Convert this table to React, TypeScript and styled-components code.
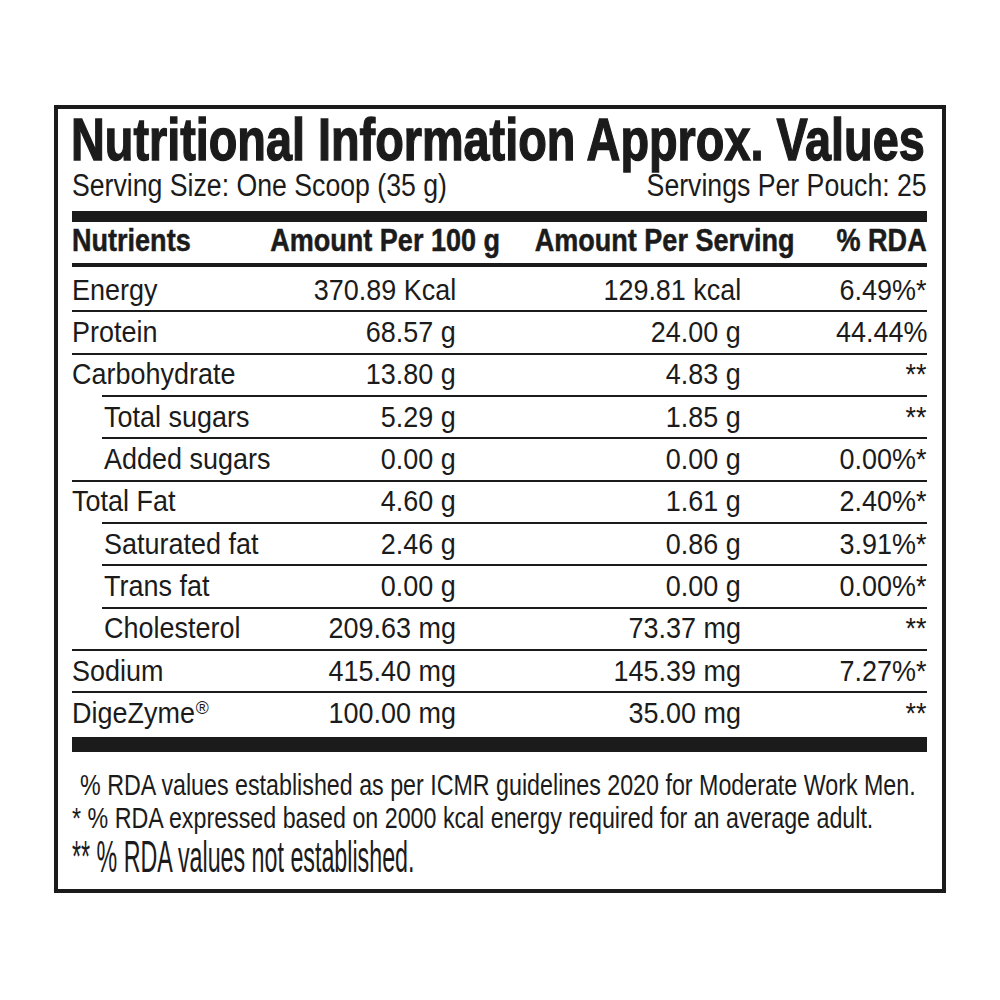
import React from 'react';
import styled, {createGlobalStyle} from 'styled-components';

const INK = '#1b1b1b';

const GlobalStyle = createGlobalStyle`
  html, body {
    margin: 0;
    padding: 0;
    background: #fff;
  }
  body {
    font-family: "Liberation Sans", Arial, sans-serif;
    color: ${INK};
  }
`;

interface Nutrient {
  name: string;
  per100: string;
  perServing: string;
  rda: string;
  sub?: boolean;
  mark?: boolean;
}

const nutrients: Nutrient[] = [
  {name: 'Energy', per100: '370.89 Kcal', perServing: '129.81 kcal', rda: '6.49%*'},
  {name: 'Protein', per100: '68.57 g', perServing: '24.00 g', rda: '44.44%'},
  {name: 'Carbohydrate', per100: '13.80 g', perServing: '4.83 g', rda: '**'},
  {name: 'Total sugars', per100: '5.29 g', perServing: '1.85 g', rda: '**', sub: true},
  {name: 'Added sugars', per100: '0.00 g', perServing: '0.00 g', rda: '0.00%*', sub: true},
  {name: 'Total Fat', per100: '4.60 g', perServing: '1.61 g', rda: '2.40%*'},
  {name: 'Saturated fat', per100: '2.46 g', perServing: '0.86 g', rda: '3.91%*', sub: true},
  {name: 'Trans fat', per100: '0.00 g', perServing: '0.00 g', rda: '0.00%*', sub: true},
  {name: 'Cholesterol', per100: '209.63 mg', perServing: '73.37 mg', rda: '**', sub: true},
  {name: 'Sodium', per100: '415.40 mg', perServing: '145.39 mg', rda: '7.27%*'},
  {name: 'DigeZyme', per100: '100.00 mg', perServing: '35.00 mg', rda: '**', mark: true},
];

// the label is set in a condensed face; Arial metrics squeezed by --sx stand in for it
const Fit = styled.span<{ $end?: boolean }>`
  display: inline-block;
  flex-shrink: 0;
  white-space: nowrap;
  transform: scale(var(--sx, 1), var(--sy, 1));
  transform-origin: ${(p) => (p.$end ? '100%' : '0')} var(--oy, 50%);
`;

const Page = styled.div`
  padding: 105px 0 0 54px;
`;

const Label = styled.section`
  width: 892px;
  box-sizing: border-box;
  border: 4px solid ${INK};
  padding: 2.2px 15px 11.2px 14px;
  overflow: hidden;
`;

const Title = styled.h1`
  --sx: 0.78;
  margin: 0 0 0 -1px;
  font-size: 60px;
  line-height: 58px;
  font-weight: 700;
  -webkit-text-stroke: 1.4px ${INK};
`;

const ServingLine = styled.div`
  --sx: 0.86;
  display: flex;
  justify-content: space-between;
  font-size: 31px;
  line-height: 34px;
`;

const Bar = styled.div<{ $h: number; $top?: number }>`
  height: ${(p) => p.$h}px;
  margin-top: ${(p) => p.$top ?? 0}px;
  background: ${INK};
`;

const HeadRow = styled.div`
  --sx: 0.845;
  display: grid;
  grid-template-columns: minmax(0, 1fr) 260px 295px 132px;
  padding-bottom: 5px;
  font-size: 32px;
  line-height: 36px;
  font-weight: 700;
  -webkit-text-stroke: 0.5px ${INK};
`;

const Cell = styled.div<{ $end?: boolean; $sub?: boolean }>`
  display: flex;
  justify-content: ${(p) => (p.$end ? 'flex-end' : 'flex-start')};
  min-width: 0;
  padding-left: ${(p) => (p.$sub ? 32 : 0)}px;
`;

const Body = styled.div`
  padding-top: 2.7px;
`;

const Row = styled.div`
  --sx: 0.93;
  display: grid;
  grid-template-columns: minmax(0, 1fr) 190px 285px 186px;
  height: 40.33px;
  box-sizing: border-box;
  padding-top: 1.7px;
  font-size: 29px;
  line-height: 36px;
`;

const Sup = styled.span`
  font-size: 19px;
  line-height: 0;
  vertical-align: 9px;
  margin-left: 1px;
`;

const RowRule = styled.div<{ $indent?: boolean }>`
  height: 2px;
  margin-left: ${(p) => (p.$indent ? 30 : 0)}px;
  background: ${INK};
`;

const Notes = styled.div`
  --sx: 0.775;
  margin-top: 15.8px;
  font-size: 30px;
  line-height: 33px;
`;

const Note = styled.div<{ $tall?: boolean; $indent?: number }>`
  --sy: ${(p) => (p.$tall ? 1.46 : 1)};
  --oy: 26.9px;
  padding-left: ${(p) => p.$indent ?? 0}px;
  margin-top: ${(p) => (p.$tall ? 10.7 : 0)}px;
`;

export default function App() {
  return (
    <>
      <GlobalStyle />
      <Page>
        <Label>
          <Title>
            <Fit>Nutritional Information Approx. Values</Fit>
          </Title>
          <ServingLine>
            <Fit>Serving Size: One Scoop (35 g)</Fit>
            <Fit $end>Servings Per Pouch: 25</Fit>
          </ServingLine>
          <Bar $h={11} $top={8} />
          <HeadRow>
            <Cell><Fit>Nutrients</Fit></Cell>
            <Cell $end><Fit $end>Amount Per 100 g</Fit></Cell>
            <Cell $end><Fit $end>Amount Per Serving</Fit></Cell>
            <Cell $end><Fit $end>% RDA</Fit></Cell>
          </HeadRow>
          <Bar $h={4} />
          <Body>
            {nutrients.map((n, i) => {
              const next = nutrients[i + 1];
              return (
                <React.Fragment key={n.name}>
                  <Row>
                    <Cell $sub={n.sub}>
                      <Fit>
                        {n.name}
                        {n.mark && <Sup>®</Sup>}
                      </Fit>
                    </Cell>
                    <Cell $end><Fit $end>{n.per100}</Fit></Cell>
                    <Cell $end><Fit $end>{n.perServing}</Fit></Cell>
                    <Cell $end><Fit $end>{n.rda}</Fit></Cell>
                  </Row>
                  {next && <RowRule $indent={next.sub} />}
                </React.Fragment>
              );
            })}
          </Body>
          <Bar $h={15} $top={4} />
          <Notes>
            <Note $indent={8}>
              <Fit>% RDA values established as per ICMR guidelines 2020 for Moderate Work Men.</Fit>
            </Note>
            <Note>
              <Fit>* % RDA expressed based on 2000 kcal energy required for an average adult.</Fit>
            </Note>
            <Note $tall>
              <Fit>** % RDA values not established.</Fit>
            </Note>
          </Notes>
        </Label>
      </Page>
    </>
  );
}
